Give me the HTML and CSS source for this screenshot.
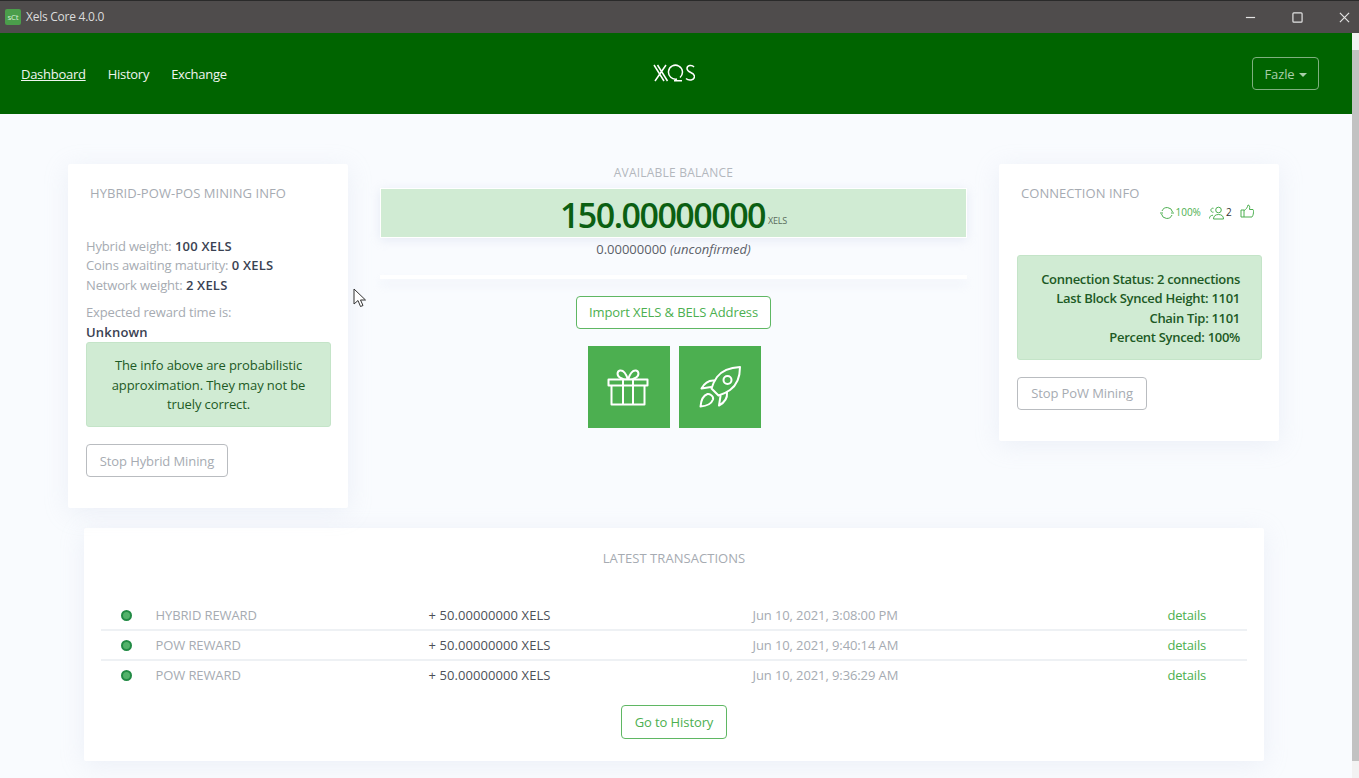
FILE: index.html
```html
<!DOCTYPE html>
<html lang="en">
<head>
<meta charset="utf-8">
<title>Xels Core 4.0.0</title>
<link rel="stylesheet" href="styles.css">
</head>
<body>
<header class="titlebar">
  <span class="app-icon">sCt</span>
  <span class="app-title">Xels Core 4.0.0</span>
  <span class="win-controls">
    <svg class="win-icon" viewBox="0 0 12 12"><path d="M1 6h10"/></svg>
    <svg class="win-icon" viewBox="0 0 12 12"><rect x="1" y="1" width="10" height="10" rx="1"/></svg>
    <svg class="win-icon" viewBox="0 0 12 12"><path d="M1 1l10 10M11 1L1 11"/></svg>
  </span>
</header>
<div class="window">
  <div class="app">
    <nav class="navbar">
      <div class="nav-links">
        <a class="nav-link active">Dashboard</a>
        <a class="nav-link">History</a>
        <a class="nav-link">Exchange</a>
      </div>
      <svg class="logo" viewBox="0 0 42 18" aria-label="XELS logo" role="img">
        <path d="M1 1l10 16M4.500 1l10 16M13 1L2 17"/>
        <path d="M24 15a7 7 0 1 1 3-1.500M21 16.800h8"/>
        <path d="M41 3c-2-2.500-7-2-7 1.500 0 4.500 7.500 3.500 7.500 8 0 4-6 4.500-8.500 2"/>
      </svg>
      <div class="nav-end"><button class="user-btn">Fazle<span class="caret"></span></button></div>
    </nav>
    <main class="content">
      <section class="top-grid">
        <article class="card mining">
          <h2 class="card-title">HYBRID-POW-POS MINING INFO</h2>
          <p class="stats"><span class="muted">Hybrid weight:</span> <b>100 XELS</b><br><span class="muted">Coins awaiting maturity:</span> <b>0 XELS</b><br><span class="muted">Network weight:</span> <b>2 XELS</b></p>
          <p class="expected"><span class="muted">Expected reward time is:</span><br><b>Unknown</b></p>
          <div class="alert alert-center">The info above are probabilistic approximation. They may not be truely correct.</div>
          <button class="btn btn-grey">Stop Hybrid Mining</button>
        </article>
        <div class="balance">
          <div class="balance-label">AVAILABLE BALANCE</div>
          <div class="balance-bar"><span class="amount">150.00000000</span><span class="unit">XELS</span></div>
          <div class="unconfirmed">0.00000000 <em>(unconfirmed)</em></div>
          <div class="divider"></div>
          <button class="btn btn-green">Import XELS &amp; BELS Address</button>
          <div class="tiles">
            <div class="tile">
              <svg class="gift" viewBox="0 0 42 42"><path d="M1.500 13.500h39v6h-39zM4.500 19.500v19h33v-19M16 13.500v25M26 13.500v25M21 13.500c-2-6-5-9.500-8-9-3 .5-3.500 5 0 7 2 1.200 5 2 8 2zM21 13.500c2-6 5-9.500 8-9 3 .5 3.500 5 0 7-2 1.200-5 2-8 2z"/></svg>
            </div>
            <div class="tile">
              <svg viewBox="0 0 42 42"><path d="M41 1c-10 .5-18 3.500-23 10-2.500 3.500-4.500 8-5.500 11.500l7 7c3.500-1 8-3 11.500-5.500 7-5 10-13 10-23z"/><circle cx="28.500" cy="14" r="4"/><path d="M15.500 14.500c-5-.5-9.500 1.500-13 8l9.500-1.500M28 26.500c.5 5-1.500 9.500-8 13l1.500-9.500M8.500 28c-4 1.500-6.500 6-7 12.500 6.500-.5 11-3 12.500-7 .5-2-.5-3.500-2-4.500-1-.7-2.300-1.200-3.500-1z"/></svg>
            </div>
          </div>
        </div>
        <article class="card connection">
          <h2 class="card-title">CONNECTION INFO</h2>
          <div class="status-icons">
            <svg class="mini" viewBox="0 0 14 14"><path d="M2 5a5.500 5.500 0 0 1 10.500 1M12 9a5.500 5.500 0 0 1-10.500-1M0 7h3M11 7h3"/></svg><span class="pct">100%</span>
            <svg class="mini people" viewBox="0 0 16 14"><circle cx="9.500" cy="4" r="2.800"/><path d="M4.500 13c0-3 2-4.500 5-4.500s5 1.500 5 4.500zM4.500 2.300a2 2 0 1 0 0 3.800M.5 12.500c0-2 1-3 3.500-3.300"/></svg><span class="count">2</span>
            <svg class="mini thumb" viewBox="0 0 14 14"><path d="M1 6h3v7H1zM4 6.500c2-1 3.500-3 4-5.500 1.500 0 2 1.500 1.500 4.500h3.500c1 .5.500 6-1 7.500H4"/></svg>
          </div>
          <div class="alert alert-right">Connection Status: 2 connections<br>Last Block Synced Height: 1101<br>Chain Tip: 1101<br>Percent Synced: 100%</div>
          <button class="btn btn-grey">Stop PoW Mining</button>
        </article>
      </section>
      <section class="card transactions">
        <h2 class="tx-title">LATEST TRANSACTIONS</h2>
        <div class="tx-row"><span class="dot"></span><span class="tx-type">HYBRID REWARD</span><span class="tx-amount">+ 50.00000000 XELS</span><span class="tx-date">Jun 10, 2021, 3:08:00 PM</span><a class="tx-link">details</a></div>
        <div class="tx-row"><span class="dot"></span><span class="tx-type">POW REWARD</span><span class="tx-amount">+ 50.00000000 XELS</span><span class="tx-date">Jun 10, 2021, 9:40:14 AM</span><a class="tx-link">details</a></div>
        <div class="tx-row tx-last"><span class="dot"></span><span class="tx-type">POW REWARD</span><span class="tx-amount">+ 50.00000000 XELS</span><span class="tx-date">Jun 10, 2021, 9:36:29 AM</span><a class="tx-link">details</a></div>
        <button class="btn btn-green history-btn">Go to History</button>
      </section>
    </main>
  </div>
  <div class="scrollbar"><span class="arrow-up"></span><span class="thumb-bar"></span><span class="arrow-down"></span></div>
</div>
<svg class="cursor" viewBox="0 0 14 20"><path d="M1 1v15l4-3.500 2.500 6 2.500-1-2.500-5.500h5z"/></svg>
</body>
</html>
```
FILE: styles.css
```css
* { box-sizing: border-box; }
html, body { height: 100%; }
body {
  margin: 0;
  height: 778px;
  overflow: hidden;
  font-family: "Open Sans", "Noto Sans", sans-serif;
  font-size: 13px;
  letter-spacing: -0.1px;
  line-height: 19.500px;
  color: #343a40;
  background: #f9fbfe;
}
.titlebar {
  height: 33px;
  display: flex;
  align-items: center;
  background: #4f4c4c;
  border-top: 1px solid #2a2a2a;
  color: #dcdcdc;
  padding-left: 5px;
  letter-spacing: -0.25px;
}
.app-icon {
  width: 16px;
  height: 16px;
  border-radius: 2px;
  background: #4b9e4b;
  color: #d8f0d8;
  font-size: 8px;
  line-height: 16px;
  text-align: center;
  overflow: hidden;
}
.app-title { margin-left: 5px; font-size: 12px; }
.win-controls {
  margin-left: auto;
  display: flex;
  gap: 36px;
  padding-right: 9px;
}
.win-icon { width: 11px; height: 11px; fill: none; stroke: #e4e4e4; stroke-width: 1.300; }
.window { display: flex; height: 745px; }
.app { flex: 1; min-width: 0; }
.scrollbar {
  width: 7px;
  display: flex;
  flex-direction: column;
  align-items: center;
  background: #f2f2f2;
}
.arrow-up { height: 17px; flex: none; }
.thumb-bar { flex: 1; width: 100%; background: #c2c2c2; }
.arrow-down { height: 17px; flex: none; }
.navbar {
  height: 81px;
  background: #006400;
  display: grid;
  grid-template-columns: 1fr auto 1fr;
  align-items: center;
  padding: 0 33px 0 21px;
}
.nav-links { display: flex; gap: 22px; padding-top: 3px; letter-spacing: -0.27px; }
.nav-link { color: #f0f5f0; }
.nav-link.active { text-decoration: underline; }
.logo { width: 42px; height: 18px; fill: none; stroke: #fff; stroke-width: 1.500; margin-left: 3.500px; margin-top: -1px; margin-right: -3.500px; }
.nav-end { display: flex; justify-content: flex-end; }
.user-btn {
  width: 67px;
  height: 33px;
  padding: 2px 0 0;
  border: 1px solid #7fb07f;
  border-radius: 4px;
  background: transparent;
  color: #a9cfa9;
  font: inherit;
  letter-spacing: inherit;
}
.caret {
  display: inline-block;
  margin-left: 4px;
  vertical-align: 2px;
  border-top: 4px solid #a9cfa9;
  border-left: 4px solid transparent;
  border-right: 4px solid transparent;
}
.content { padding: 50px 0 0 68px; }
.top-grid {
  display: grid;
  grid-template-columns: 280px 587px 280px;
  column-gap: 32px;
  align-items: start;
}
.card {
  background: #fff;
  border-radius: 2px;
  box-shadow: 0 4px 24px rgba(190, 200, 225, 0.22);
}
.mining { padding: 20px 17px 31px 18px; height: 344px; }
.connection { padding: 20px 17px 31px 18px; height: 277px; }
.card-title {
  margin: 0;
  padding-left: 4px;
  font-size: 13px;
  font-weight: 400;
  letter-spacing: 0.05px;
  color: #a6abb2;
}
.stats { margin: 33px 0 0; }
.expected { margin: 8px 0 0; }
.muted { color: #a6abb2; letter-spacing: -0.15px; }
b { font-weight: 600; color: #3a4252; letter-spacing: 0.2px; }
.alert {
  background: #d0ebd3;
  border: 1px solid #c4e4c8;
  border-radius: 3px;
  color: #1d5a25;
}
.alert-center {
  padding: 13px 20px;
  height: 85px;
  text-align: center;
}
.alert-right {
  margin-top: 33px;
  height: 105px;
  padding: 14px 21px;
  text-align: right;
  font-weight: 600;
  letter-spacing: -0.3px;
}
.btn {
  display: block;
  height: 33px;
  padding: 2px 0 0;
  border-radius: 4px;
  background: #fff;
  font: inherit;
  letter-spacing: inherit;
  white-space: nowrap;
}
.btn-grey { margin-top: 17px; border: 1px solid #b9bcc0; color: #a6abb2; }
.mining .btn-grey { width: 142px; }
.connection .btn-grey { width: 130px; }
.btn-green { border: 1px solid #5fb763; color: #4caf50; }
.balance { display: flex; flex-direction: column; align-items: center; }
.balance-label { margin-top: -1px; color: #b3b7bd; font-size: 12px; height: 24px; letter-spacing: 0.22px; }
.balance-bar {
  width: 100%;
  height: 50px;
  margin-top: 1px;
  background: #d0ebd3;
  border: 1px solid #fff;
  box-shadow: 0 2px 10px rgba(190, 200, 225, 0.3);
  display: flex;
  align-items: center;
  justify-content: center;
}
.amount { font-size: 34px; font-weight: 600; color: #0b5f12; letter-spacing: -1.500px; line-height: 40px; padding-top: 3px; }
.unit { font-size: 9px; color: #5a6b5c; margin: 15px 0 0 3px; line-height: 10px; letter-spacing: -0.2px; }
.unconfirmed { margin-top: 2px; color: #5b6068; letter-spacing: 0; }
.divider {
  width: 100%;
  height: 4px;
  margin-top: 15px;
  background: #fff;
  box-shadow: 0 6px 10px rgba(190, 200, 225, 0.2);
}
.balance .btn-green { margin-top: 17px; width: 195px; }
.tiles { display: flex; gap: 9px; margin-top: 17px; margin-left: 2px; }
.tile {
  width: 82px;
  height: 82px;
  background: #4caf50;
  display: flex;
  align-items: center;
  justify-content: center;
}
.tile svg { width: 42px; height: 42px; fill: none; stroke: #fff; stroke-width: 2; stroke-linejoin: round; stroke-linecap: round; }
.tile .gift { margin-right: 3px; }
.status-icons {
  display: flex;
  align-items: center;
  justify-content: flex-end;
  height: 18px;
  padding-right: 8.500px;
  font-size: 10px;
  color: #4caf50;
}
.mini { width: 14px; height: 14px; fill: none; stroke: #4caf50; stroke-width: 1; }
.people { width: 16px; margin-left: 8px; }
.thumb { margin-left: 8px; margin-top: -4px; }
.pct { margin-left: 1px; letter-spacing: 0; }
.count { margin-left: 1px; color: #333; }
.transactions {
  width: 1180px;
  height: 233px;
  margin: 20px 0 0 16px;
  padding: 21px 17px 0;
  display: flex;
  flex-direction: column;
}
.tx-title { margin: 0 0 32px; font-size: 13px; font-weight: 400; text-align: center; letter-spacing: 0.05px; color: #a6abb2; }
.tx-row {
  display: flex;
  align-items: center;
  height: 30px;
  padding-top: 2px;
  border-bottom: 2px solid #eef1f4;
  flex: none;
}
.tx-last { border-bottom-color: transparent; }
.dot {
  width: 11px;
  height: 11px;
  margin-left: 19.500px;
  border-radius: 50%;
  background: #52b26a;
  border: 2px solid #218a44;
}
.tx-type { width: 273px; margin-left: 24px; color: #a6abb2; letter-spacing: -0.1px; }
.tx-amount { width: 324px; color: #4c5158; letter-spacing: 0.08px; }
.tx-date { width: 415px; color: #a6abb2; letter-spacing: -0.1px; }
.tx-link { color: #4caf50; letter-spacing: -0.2px; }
.history-btn { align-self: center; margin-top: 14px; width: 106px; height: 34px; }
.cursor {
  position: absolute;
  left: 353px;
  top: 288px;
  width: 14px;
  height: 20px;
  fill: #fff;
  stroke: #333;
  stroke-width: 1;
}
```
